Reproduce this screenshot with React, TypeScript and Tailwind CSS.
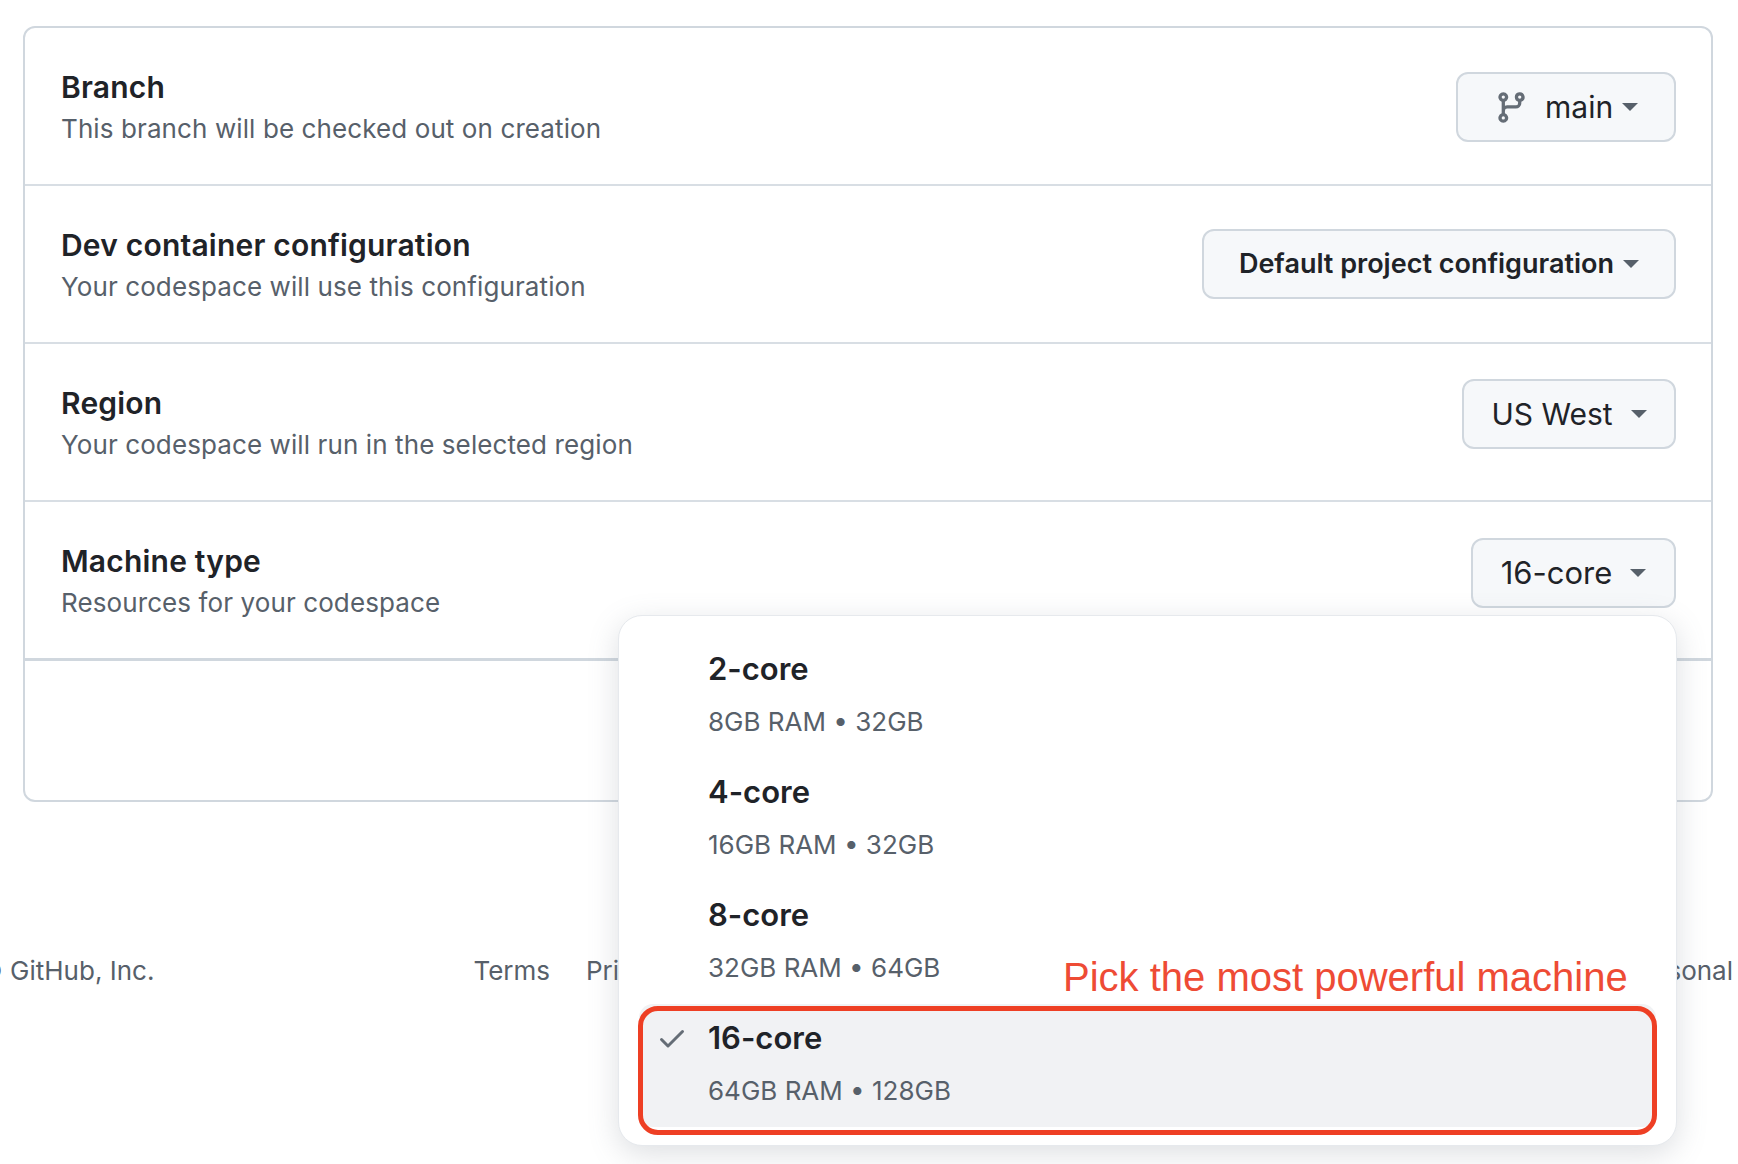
const FONT = "font-['Inter','Noto_Sans',sans-serif]";

function BranchIcon() {
  return (
    <svg viewBox="0 0 16 16" className="h-[35px] w-[35px] fill-[#656d76]">
      <path d="M9.5 3.25a2.25 2.25 0 1 1 3 2.122V6A2.5 2.5 0 0 1 10 8.5H6a1 1 0 0 0-1 1v1.128a2.251 2.251 0 1 1-1.5 0V5.372a2.25 2.25 0 1 1 1.5 0v1.836A2.493 2.493 0 0 1 6 7h4a1 1 0 0 0 1-1v-.628A2.25 2.25 0 0 1 9.5 3.25Zm-6 0a.75.75 0 1 0 1.5 0 .75.75 0 0 0-1.5 0Zm8.25-.75a.75.75 0 1 0 0 1.5.75.75 0 0 0 0-1.5ZM4.25 12a.75.75 0 1 0 0 1.5.75.75 0 0 0 0-1.5Z" />
    </svg>
  );
}

function CheckIcon() {
  return (
    <svg viewBox="0 0 16 16" className="h-[32px] w-[32px] fill-[#656d76]">
      <path d="M13.78 4.22a.75.75 0 0 1 0 1.06l-7.25 7.25a.75.75 0 0 1-1.06 0L2.22 9.28a.751.751 0 0 1 .018-1.042.751.751 0 0 1 1.042-.018L6 10.94l6.72-6.72a.75.75 0 0 1 1.06 0Z" />
    </svg>
  );
}

function Caret({ className }: { className: string }) {
  return (
    <span className={`h-0 w-0 border-x-[8px] border-t-[8px] border-x-transparent border-t-[#57606a] ${className}`} />
  );
}

function Info({ title, desc }: { title: string; desc: string }) {
  return (
    <div className="pt-[3px]">
      <div className="text-[30px] leading-[42px] font-semibold tracking-[0.2px] text-[#1f2328]">{title}</div>
      <div className="mt-[1px] text-[26px] leading-[40px] tracking-[0.1px] text-[#57606a]">{desc}</div>
    </div>
  );
}

function Row({ title, desc, children }: { title: string; desc: string; children: React.ReactNode }) {
  return (
    <div className="flex h-[158px] items-center justify-between border-b-2 border-[#d8dee4] pr-[35px] pl-[36px]">
      <Info title={title} desc={desc} />
      {children}
    </div>
  );
}

function Button({ children, className }: { children: React.ReactNode; className: string }) {
  return (
    <div className={`flex h-[70px] items-center rounded-[12px] border-2 border-[#d0d7de] bg-[#f6f8fa] text-[#1f2328] ${className}`}>
      {children}
    </div>
  );
}

const MACHINES = [
  { name: "2-core", spec: "8GB RAM • 32GB" },
  { name: "4-core", spec: "16GB RAM • 32GB" },
  { name: "8-core", spec: "32GB RAM • 64GB" },
  { name: "16-core", spec: "64GB RAM • 128GB", selected: true },
];

export default function App() {
  return (
    <div className={`relative h-[1164px] w-[1738px] overflow-hidden bg-white ${FONT}`}>
      <div className="mt-[26px] mr-[25px] ml-[23px] h-[776px] rounded-[12px] border-2 border-[#d0d7de]">
        <Row title="Branch" desc="This branch will be checked out on creation">
          <Button className="mt-[2px] w-[220px] pl-[36px]">
            <BranchIcon />
            <span className="ml-[16px] text-[30px]">main</span>
            <Caret className="ml-[9px]" />
          </Button>
        </Row>
        <Row title="Dev container configuration" desc="Your codespace will use this configuration">
          <Button className="w-[474px] justify-center">
            <span className="pt-[1px] text-[27px] font-semibold">Default project configuration</span>
            <Caret className="ml-[9px]" />
          </Button>
        </Row>
        <Row title="Region" desc="Your codespace will run in the selected region">
          <Button className="mb-[16px] w-[214px] justify-center">
            <span className="text-[30px]">US West</span>
            <Caret className="ml-[18px]" />
          </Button>
        </Row>
        <div className="flex h-[159px] items-center justify-between border-b-[3px] border-[#d0d7de] pr-[35px] pl-[36px]">
          <Info title="Machine type" desc="Resources for your codespace" />
          <Button className="mb-[14px] w-[205px] justify-center">
            <span className="text-[31px]">16-core</span>
            <Caret className="ml-[18px]" />
          </Button>
        </div>
      </div>

      <div className="mt-[149px] flex text-[26px] leading-[40px] text-[#57606a]">
        <span className="ml-[-21px]">© GitHub, Inc.</span>
        <span className="ml-[319px]">Terms</span>
        <span className="ml-[36px]">Privacy</span>
        <span className="mr-[5px] ml-auto">Personal</span>
      </div>

      {/* dropdown */}
      <div className="absolute top-[615px] left-[618px] h-[531px] w-[1059px] rounded-[24px] border border-[#e6e9ed] bg-white px-[20px] pt-[19px] shadow-[0_8px_30px_rgba(100,110,125,0.22)]">
        {MACHINES.map((m) => (
          <div
            key={m.name}
            className={`relative h-[123px] rounded-[14px] pl-[69px] ${m.selected ? "bg-[#f1f2f4]" : ""}`}
          >
            {m.selected && (
              <div className="absolute top-[18px] left-[17px]">
                <CheckIcon />
              </div>
            )}
            <div className="pt-[13px] text-[31px] leading-[42px] font-semibold text-[#1f2328]">{m.name}</div>
            <div className="mt-[12px] text-[26px] leading-[40px] text-[#57606a]">{m.spec}</div>
          </div>
        ))}
      </div>

      {/* annotation */}
      <div className="absolute top-[1006px] left-[638px] h-[129px] w-[1019px] rounded-[20px] border-[5px] border-[#ee3f24]" />
      <div className="absolute top-[951px] left-[1063px] font-['Liberation_Sans',sans-serif] text-[40px] leading-[52px] whitespace-nowrap text-[#ee4b35]">
        Pick the most powerful machine
      </div>
    </div>
  );
}
